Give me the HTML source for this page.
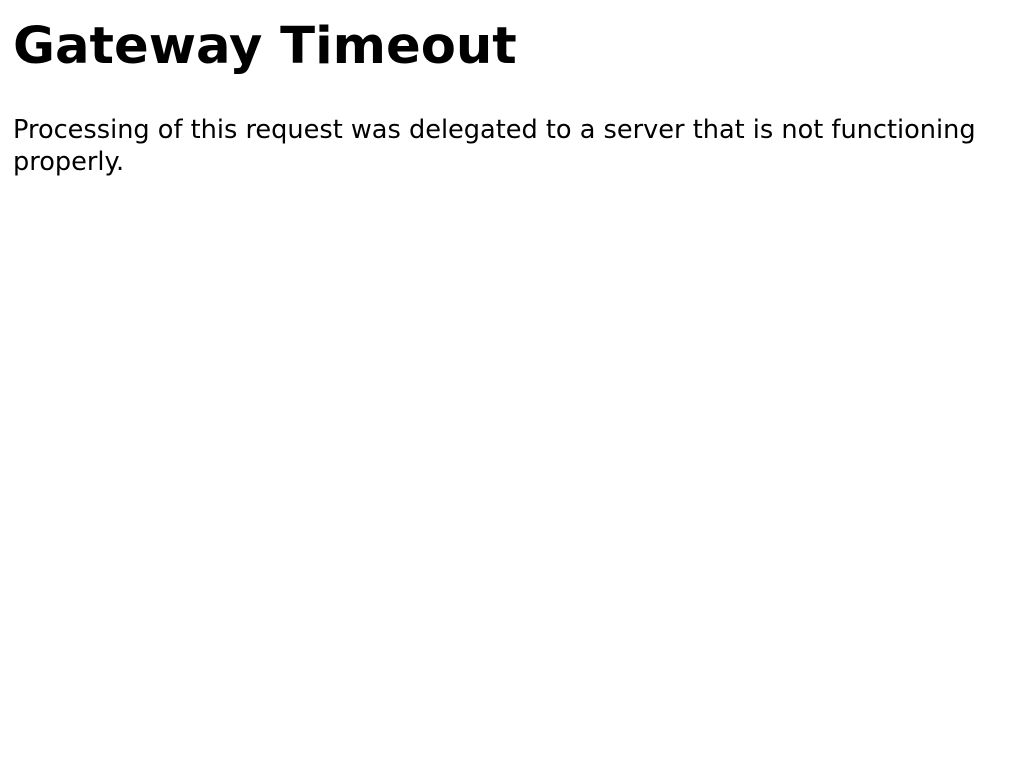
<!DOCTYPE html>
<html><head><style>
html,body{margin:0;padding:0;background:#fff;}
body{margin:13px;font-family:"DejaVu Sans",sans-serif;font-size:25.6px;color:#000;}
h1{font-size:51.2px;font-weight:bold;margin:16px 0 0 0;line-height:60px;}
p{margin:38px 0 0 0;line-height:32px;}
</style></head><body>
<h1>Gateway Timeout</h1>
<p>Processing of this request was delegated to a server that is not functioning properly.</p>
</body></html>
